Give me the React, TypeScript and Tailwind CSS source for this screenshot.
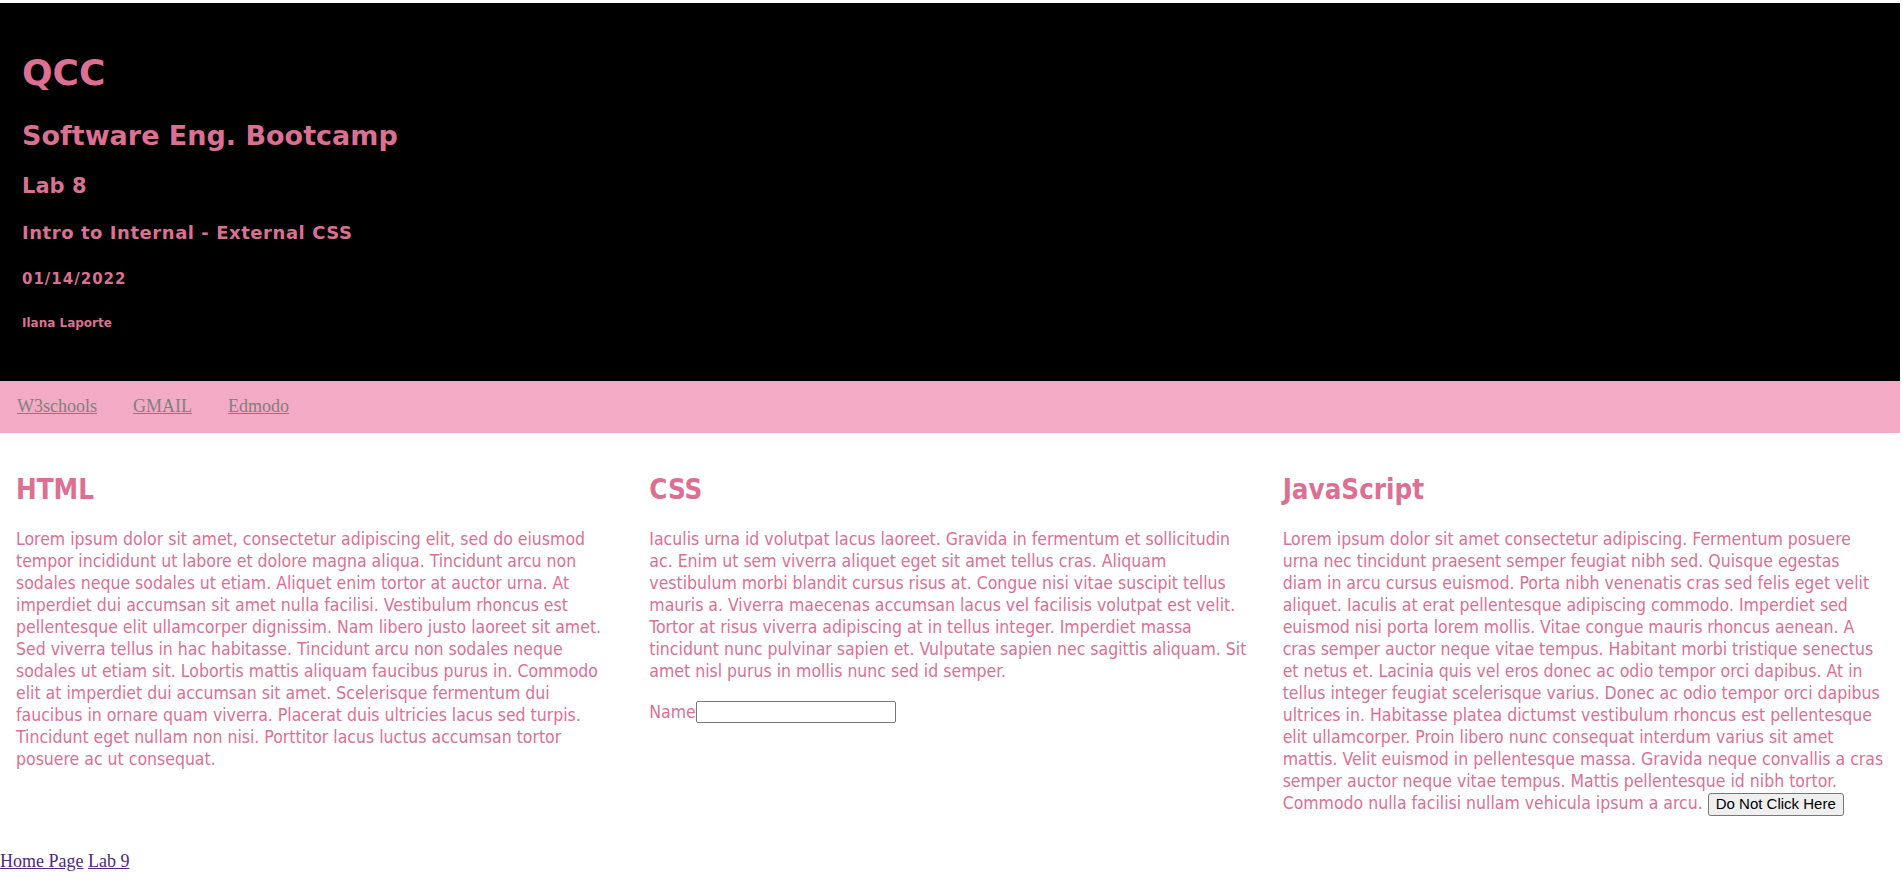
import React from "react";

const htmlLines = [
  "Lorem ipsum dolor sit amet, consectetur adipiscing elit, sed do eiusmod",
  "tempor incididunt ut labore et dolore magna aliqua. Tincidunt arcu non",
  "sodales neque sodales ut etiam. Aliquet enim tortor at auctor urna. At",
  "imperdiet dui accumsan sit amet nulla facilisi. Vestibulum rhoncus est",
  "pellentesque elit ullamcorper dignissim. Nam libero justo laoreet sit amet.",
  "Sed viverra tellus in hac habitasse. Tincidunt arcu non sodales neque",
  "sodales ut etiam sit. Lobortis mattis aliquam faucibus purus in. Commodo",
  "elit at imperdiet dui accumsan sit amet. Scelerisque fermentum dui",
  "faucibus in ornare quam viverra. Placerat duis ultricies lacus sed turpis.",
  "Tincidunt eget nullam non nisi. Porttitor lacus luctus accumsan tortor",
  "posuere ac ut consequat.",
];

const cssLines = [
  "Iaculis urna id volutpat lacus laoreet. Gravida in fermentum et sollicitudin",
  "ac. Enim ut sem viverra aliquet eget sit amet tellus cras. Aliquam",
  "vestibulum morbi blandit cursus risus at. Congue nisi vitae suscipit tellus",
  "mauris a. Viverra maecenas accumsan lacus vel facilisis volutpat est velit.",
  "Tortor at risus viverra adipiscing at in tellus integer. Imperdiet massa",
  "tincidunt nunc pulvinar sapien et. Vulputate sapien nec sagittis aliquam. Sit",
  "amet nisl purus in mollis nunc sed id semper.",
];

const jsLines = [
  "Lorem ipsum dolor sit amet consectetur adipiscing. Fermentum posuere",
  "urna nec tincidunt praesent semper feugiat nibh sed. Quisque egestas",
  "diam in arcu cursus euismod. Porta nibh venenatis cras sed felis eget velit",
  "aliquet. Iaculis at erat pellentesque adipiscing commodo. Imperdiet sed",
  "euismod nisi porta lorem mollis. Vitae congue mauris rhoncus aenean. A",
  "cras semper auctor neque vitae tempus. Habitant morbi tristique senectus",
  "et netus et. Lacinia quis vel eros donec ac odio tempor orci dapibus. At in",
  "tellus integer feugiat scelerisque varius. Donec ac odio tempor orci dapibus",
  "ultrices in. Habitasse platea dictumst vestibulum rhoncus est pellentesque",
  "elit ullamcorper. Proin libero nunc consequat interdum varius sit amet",
  "mattis. Velit euismod in pellentesque massa. Gravida neque convallis a cras",
  "semper auctor neque vitae tempus. Mattis pellentesque id nibh tortor.",
];

const Lines: React.FC<{ lines: string[] }> = ({ lines }) => (
  <>
    {lines.map((l, i) => (
      <span key={i} className="block whitespace-nowrap">
        {l}
      </span>
    ))}
  </>
);

const Column: React.FC<{ title: string; children: React.ReactNode }> = ({ title, children }) => (
  <div className="px-[16px]">
    <h2 className="mt-[40px] text-[27.5px] leading-[32px] font-bold">{title}</h2>
    <div className="mt-[23px] text-[17.5px] leading-[22px]">{children}</div>
  </div>
);

export default function App() {
  return (
    <div className="min-h-screen bg-white pt-[3px] pr-[2px]">
      <header className="bg-black text-[#db7093] font-['DejaVu_Sans',sans-serif] font-bold pl-[22px] pt-[48px] pb-[51px]">
        <h1 className="text-[36px] leading-[44px]">QCC</h1>
        <h2 className="mt-[25px] text-[27px] leading-[32px]">Software Eng. Bootcamp</h2>
        <h3 className="mt-[21px] text-[21px] leading-[26px]">Lab 8</h3>
        <h4 className="mt-[23px] text-[18px] leading-[22px] tracking-[0.55px]">Intro to Internal - External CSS</h4>
        <h5 className="mt-[26px] text-[15px] leading-[18px] tracking-[1px]">01/14/2022</h5>
        <h6 className="mt-[28px] text-[12px] leading-[14px]">Ilana Laporte</h6>
      </header>

      <nav className="h-[52px] bg-[#f3aac5] flex items-center gap-[36px] pl-[17px] pb-[1px] font-['Liberation_Serif',serif] text-[18px] text-[#808080]">
        <a href="#" className="underline">W3schools</a>
        <a href="#" className="underline">GMAIL</a>
        <a href="#" className="underline">Edmodo</a>
      </nav>

      <main className="grid grid-cols-3 text-[#db7093] font-['DejaVu_Sans_Condensed','DejaVu_Sans',sans-serif]">
        <Column title="HTML">
          <Lines lines={htmlLines} />
        </Column>
        <Column title="CSS">
          <Lines lines={cssLines} />
          <div className="mt-[18px] h-[23px] flex items-center">
            <label>Name</label>
            <input
              type="text"
              className="w-[200px] h-[22px] border border-[#767676] rounded-[2px] bg-white outline-none"
            />
          </div>
        </Column>
        <Column title="JavaScript">
          <Lines lines={jsLines} />
          <span className="block whitespace-nowrap">
            Commodo nulla facilisi nullam vehicula ipsum a arcu.{" "}
            <button className="inline-flex items-center align-middle h-[23px] px-[7px] border border-[#767676] rounded-[3px] bg-[#efefef] text-black text-[15px] font-['Liberation_Sans',Arial,sans-serif]">
              Do Not Click Here
            </button>
          </span>
        </Column>
      </main>

      <footer className="mt-[35px] font-['Liberation_Serif',serif] text-[18px] leading-[21px] text-[#4f2a7f]">
        <a href="#" className="underline">Home Page</a>{" "}
        <a href="#" className="underline">Lab 9</a>
      </footer>
    </div>
  );
}
